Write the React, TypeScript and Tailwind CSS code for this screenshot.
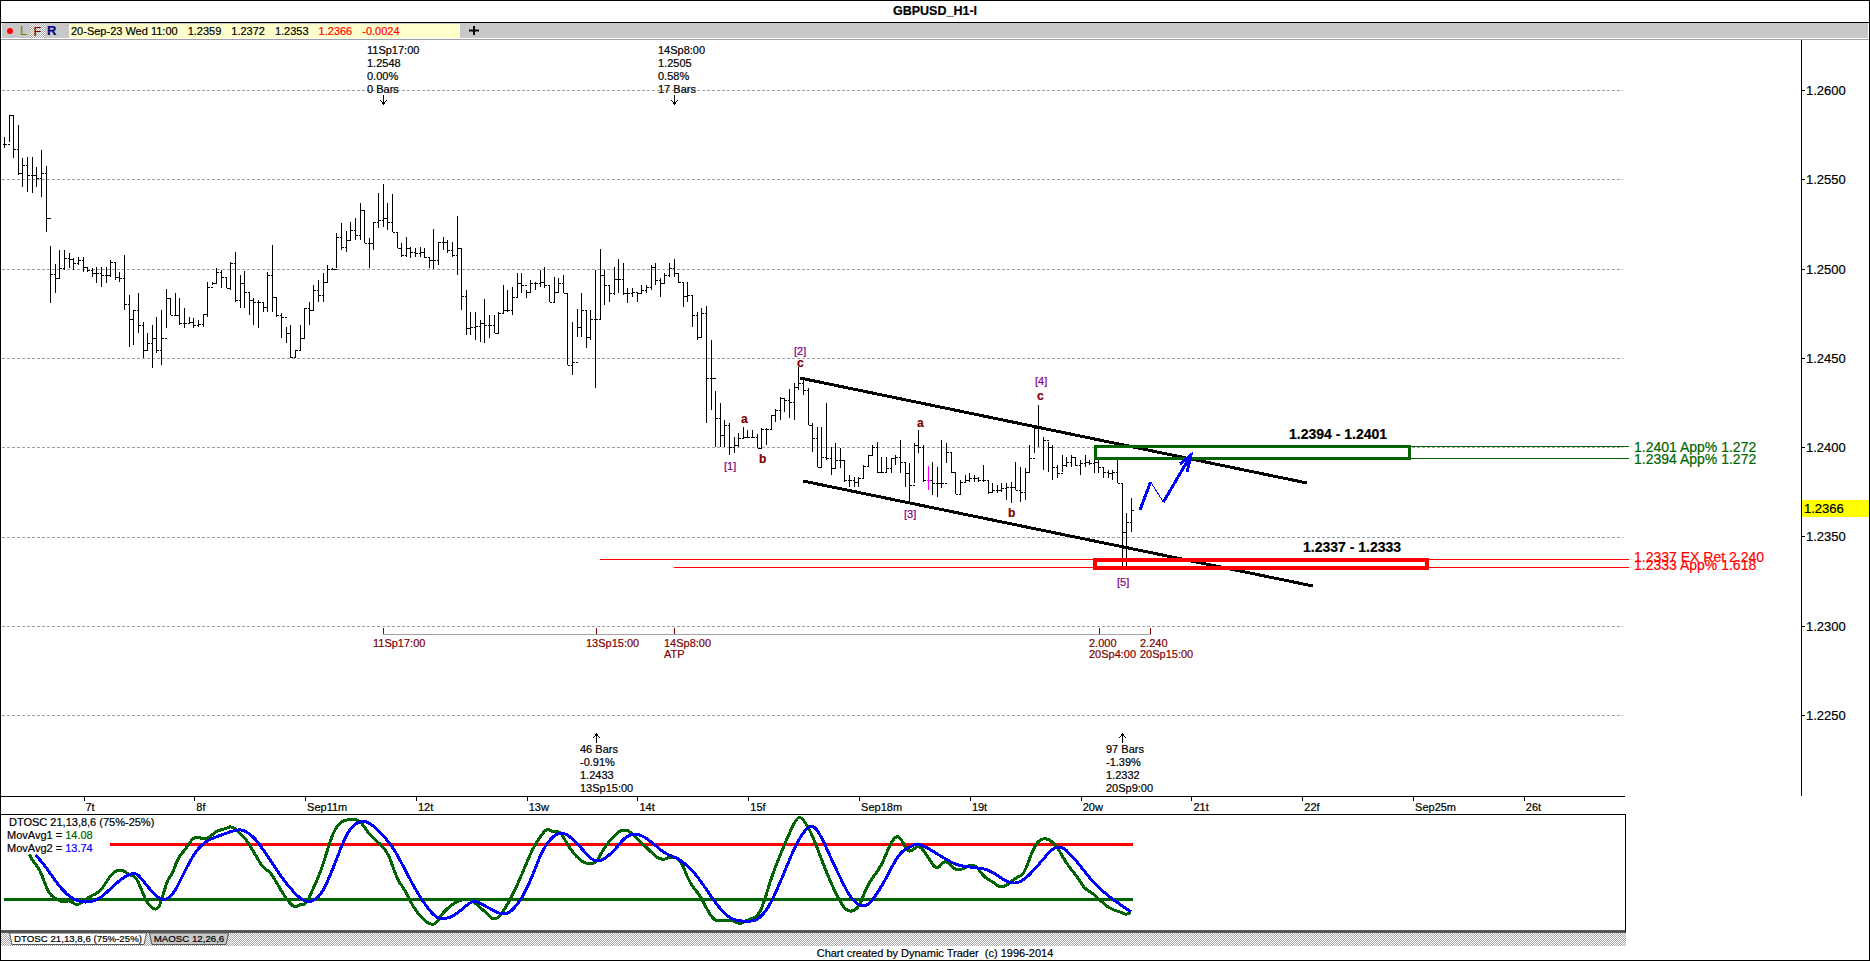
import type { ReactNode } from "react";

const FONT = "font-['Liberation_Sans',Arial,sans-serif]";
const DITHER =
  "bg-[repeating-conic-gradient(#a8a8a8_0%_25%,#ffffff_0%_50%)] [background-size:2px_2px]";

// bar data read off the chart: [high, low, close], y pixels x3
const BARS_A: number[][] = [
  [412, 445, 432], [345, 425, 345], [347, 475, 447], [375, 525, 520], [475, 560, 495], [470, 575, 525], [470, 578, 525], [500, 560, 535], [450, 590, 520], [498, 697, 655],
  [738, 908, 823], [792, 878, 833], [750, 835, 803], [750, 810, 775], [760, 805, 778], [775, 810, 790], [770, 795, 780], [772, 815, 800], [800, 815, 810], [805, 830, 820],
  [800, 850, 820], [800, 860, 825], [800, 850, 825], [780, 830, 787], [785, 840, 830], [815, 845, 833], [765, 930, 912], [885, 1040, 958], [930, 1035, 930], [878, 1000, 975],
  [965, 1075, 1050], [1000, 1050, 1030], [975, 1103, 1015], [950, 1060, 1050], [930, 1095, 1015], [868, 985, 895], [895, 945, 945], [880, 945, 945], [895, 975, 970], [925, 985, 970],
  [950, 972, 965], [955, 985, 975], [960, 980, 972], [943, 980, 943], [845, 950, 860], [845, 855, 850], [805, 850, 815], [810, 865, 830], [830, 865, 865], [785, 870, 790],
  [757, 905, 900], [825, 925, 850], [812, 925, 875], [875, 945, 900], [895, 975, 905], [900, 985, 905], [905, 935, 920], [815, 935, 825], [735, 935, 890], [890, 950, 945],
  [940, 1015, 950], [980, 1030, 1000], [975, 1075, 1070], [1050, 1072, 1050], [975, 1050, 1015], [925, 1015, 925], [905, 975, 930], [855, 930, 870], [840, 905, 885], [820, 905, 845],
  [795, 845, 808], [805, 810, 806], [700, 805, 710], [668, 750, 740], [693, 755, 720], [665, 720, 690], [655, 720, 705], [610, 720, 630], [630, 730, 730], [715, 805, 730],
  [665, 750, 665], [580, 685, 660], [552, 680, 655], [610, 690, 665], [582, 695, 695], [695, 745, 745], [730, 770, 765], [712, 770, 745], [740, 775, 755], [745, 770, 760],
  [740, 770, 755], [745, 775, 770], [770, 805, 780], [688, 808, 780], [725, 795, 725], [712, 750, 725], [720, 760, 750], [725, 770, 765], [648, 825, 745], [745, 930, 887],
  [870, 1005, 985], [935, 1005, 980], [935, 1020, 978], [960, 1025, 970], [897, 1028, 975], [945, 1015, 975], [945, 1000, 1000], [935, 1000, 940], [855, 940, 930], [870, 935, 930],
  [860, 945, 890], [820, 890, 850], [820, 880, 855], [870, 895, 875], [840, 875, 850], [845, 870, 850], [810, 860, 845], [800, 865, 855], [855, 905, 905], [830, 905, 875],
  [835, 880, 850], [825, 880, 880], [880, 1095, 1095], [965, 1125, 1085], [928, 1010, 980], [880, 1012, 930], [930, 1045, 1012], [930, 1020, 958], [810, 1163, 958], [748, 960, 825],
  [810, 915, 855], [855, 905, 878], [800, 885, 838], [778, 880, 838], [790, 885, 880], [865, 910, 880], [865, 890, 875], [880, 905, 880], [855, 880, 870], [855, 880, 860],
  [795, 870, 800], [790, 855, 840], [835, 890, 850], [820, 850, 825], [790, 830, 805], [778, 830, 820], [820, 850, 845], [845, 920, 888], [845, 905, 885], [885, 980, 945],
  [935, 1020, 1012], [925, 1015, 940], [918, 1270, 1135], [1020, 1230, 1135],
];
// second half, read from the lower crop (add 1020)
const BARS_B: number[][] = [
  [153, 320, 235], [190, 320, 285], [240, 320, 255], [250, 345, 320], [290, 340, 315], [280, 320, 295], [260, 295, 290], [270, 295, 290], [270, 295, 290], [283, 325, 325],
  [265, 325, 268], [265, 315, 268], [225, 268, 225], [208, 245, 210], [170, 240, 175], [175, 215, 180], [148, 235, 185], [130, 240, 140], [82, 150, 130], [115, 165, 150],
  [145, 255, 255], [250, 335, 295], [260, 380, 380], [262, 380, 350], [190, 360, 355], [320, 405, 385], [310, 385, 360], [325, 385, 360], [360, 425, 420], [405, 440, 420],
  [410, 440, 425], [410, 440, 415], [375, 415, 378], [345, 380, 345], [315, 345, 320], [305, 400, 395], [350, 395, 395], [350, 400, 385], [355, 400, 355], [345, 375, 350],
  [300, 400, 365], [365, 440, 400], [370, 490, 435], [310, 430, 315], [270, 340, 320], [315, 425, 420], [378, 450, 420], [365, 465, 430], [380, 472, 430], [300, 445, 430],
  [310, 370, 335], [340, 400, 395], [395, 462, 462], [420, 462, 425], [405, 425, 420], [400, 425, 415], [405, 425, 415], [410, 425, 420], [375, 425, 420], [420, 462, 455],
  [430, 460, 450], [435, 460, 450], [430, 455, 445], [430, 480, 440], [425, 488, 440], [365, 450, 450], [380, 485, 455], [385, 480, 395], [315, 395, 355], [260, 340, 265],
  [195, 320, 265], [290, 390, 300], [305, 395, 320], [315, 420, 380], [375, 415, 400], [345, 395, 375], [350, 380, 365], [345, 380, 350], [350, 378, 375], [360, 405, 370],
  [345, 380, 365], [360, 375, 368], [320, 400, 365], [350, 400, 380], [380, 415, 395], [390, 415, 400], [390, 420, 395], [352, 430, 428], [428, 687, 575], [520, 680, 545],
  [475, 575, 510],
];
const BARS = [...BARS_A, ...BARS_B.map(([h, l, c]) => [h + 1020, l + 1020, c + 1020])];
const MAGENTA_BAR = 200;

function barPaths() {
  let black = "";
  let pink = "";
  BARS.forEach(([hi, lo, close], i) => {
    const x = Math.round(4 + 4.618 * i) + 0.5;
    const open = i > 0 ? BARS[i - 1][2] : close;
    const d = `M${x} ${Math.round(hi / 3)}V${Math.round(lo / 3)}M${x - 2} ${Math.round(open / 3) + 0.5}H${x}M${x} ${Math.round(close / 3) + 0.5}H${x + 2}`;
    if (i === MAGENTA_BAR) pink += d;
    else black += d;
  });
  return { black, pink };
}

const GRID_Y = [90, 179, 269, 358, 447, 537, 626, 715];
const PRICES = ["1.2600", "1.2550", "1.2500", "1.2450", "1.2400", "1.2350", "1.2300", "1.2250"];

const DAYS = ["7t", "8f", "Sep11m", "12t", "13w", "14t", "15f", "Sep18m", "19t", "20w", "21t", "22f", "Sep25m", "26t"];

// oscillator lines, crop coordinates (x*2.24, y*3 from 680)
const G1 = [[65, 523], [75, 545], [90, 570], [100, 610], [112, 645], [130, 660], [145, 668], [155, 660], [172, 677], [185, 665], [200, 650], [215, 642], [230, 625], [245, 590], [262, 570], [275, 570], [290, 585], [305, 590], [320, 640], [332, 675], [352, 693], [362, 660], [375, 600], [385, 585], [400, 530], [415, 510], [435, 467], [455, 478], [470, 472], [485, 452], [505, 447], [517, 438], [530, 450], [550, 475], [570, 520], [590, 565], [605, 575], [625, 620], [640, 655], [660, 685], [672, 672], [685, 675], [700, 630], [720, 570], [740, 480], [755, 435], [775, 418], [805, 418], [825, 460], [850, 490], [870, 520], [890, 600], [905, 625], [925, 680], [945, 715], [965, 735], [978, 730], [990, 700], [1020, 665], [1050, 655], [1065, 670], [1085, 693], [1108, 725], [1130, 690], [1150, 640], [1170, 580], [1190, 515], [1205, 480], [1225, 443], [1240, 458], [1255, 452], [1275, 505], [1305, 550], [1335, 552], [1350, 510], [1370, 475], [1390, 450], [1408, 450], [1430, 480], [1450, 505], [1480, 543], [1505, 528], [1525, 540], [1545, 610], [1568, 645]];
const G2 = [[65, 700], [80, 725], [100, 720], [120, 722], [135, 733], [150, 720], [175, 710], [190, 660], [205, 590], [235, 490], [262, 410], [275, 415], [295, 460], [320, 550], [345, 630], [365, 680], [380, 697], [400, 685], [415, 630], [430, 595], [450, 560], [470, 495], [485, 465], [497, 480], [513, 522], [535, 492], [555, 530], [575, 573], [595, 535], [620, 578], [658, 547], [680, 590], [700, 605], [722, 627], [755, 590], [770, 585], [790, 510], [805, 478], [825, 475], [845, 500], [865, 550], [890, 590], [905, 625], [925, 640], [960, 685], [985, 695], [1000, 705], [1010, 695]];
const B1 = [[80, 525], [100, 555], [125, 605], [150, 645], [175, 665], [205, 667], [230, 650], [255, 615], [285, 585], [305, 577], [325, 610], [350, 650], [370, 662], [390, 640], [415, 570], [440, 510], [465, 480], [490, 468], [530, 448], [550, 452], [575, 480], [605, 540], [640, 610], [675, 660], [695, 668], [720, 645], [745, 570], [770, 480], [790, 435], [815, 420], [840, 440], [875, 490], [900, 550], [925, 615], [950, 670], [975, 712], [995, 718], [1020, 705], [1050, 670], [1065, 662], [1090, 680], [1125, 706], [1145, 695], [1170, 655], [1195, 580], [1215, 510], [1240, 465], [1265, 455], [1300, 500], [1325, 540], [1345, 545], [1375, 515], [1400, 470], [1425, 460], [1450, 475], [1490, 522], [1520, 535], [1550, 570], [1568, 600]];
const B2 = [[85, 680], [115, 720], [150, 725], [175, 720], [200, 680], [230, 590], [260, 490], [290, 432], [310, 450], [340, 540], [365, 610], [385, 660], [410, 682], [430, 665], [460, 600], [490, 520], [520, 495], [540, 492], [580, 525], [620, 557], [660, 562], [695, 570], [735, 610], [765, 608], [800, 560], [845, 487], [885, 535], [920, 600], [960, 650], [1010, 695]];

// rounds the corners with quadratic segments through the midpoints
function curve(a: number[][], b: number[][]) {
  const pts = [
    ...a.map(([x, y]) => [x / 2.24, 680 + y / 3]),
    ...b.map(([x, y]) => [680 + x / 2.24, 680 + y / 3]),
  ];
  let d = `M${pts[0][0].toFixed(1)} ${pts[0][1].toFixed(1)}`;
  for (let i = 1; i < pts.length - 1; i++) {
    const mx = (pts[i][0] + pts[i + 1][0]) / 2;
    const my = (pts[i][1] + pts[i + 1][1]) / 2;
    d += `Q${pts[i][0].toFixed(1)} ${pts[i][1].toFixed(1)} ${mx.toFixed(1)} ${my.toFixed(1)}`;
  }
  const last = pts[pts.length - 1];
  return `${d}L${last[0].toFixed(1)} ${last[1].toFixed(1)}`;
}

// x, y: page position of the first line's top, inside the price pane (top at 40)
function Note({ x, y, className = "", children }: { x: number; y: number; className?: string; children: ReactNode }) {
  return (
    <div
      className={`absolute flex flex-col whitespace-nowrap ${className}`}
      style={{ left: x - 1, top: y - 40 - 6.5 }}
    >
      {children}
    </div>
  );
}

function Lines({ items }: { items: string[] }) {
  return (
    <>
      {items.map((t) => (
        <span key={t}>{t}</span>
      ))}
    </>
  );
}

const SWING = "text-[11px] leading-[13px] text-black";
const TIME = "text-[11px] leading-[11px] text-[#800000]";
const WAVE = "text-[11px] leading-[13px] text-[#800080]";
const SUB = "text-[12px] leading-[13px] font-bold text-[#800000]";
const RANGE = "text-[14px] leading-[13px] font-bold text-black";

function PriceChart() {
  const { black, pink } = barPaths();
  return (
    <div className="relative flex-1 overflow-hidden">
      <svg className="absolute inset-0" width={1800} height={756} viewBox="1 40 1800 756">
        <g shapeRendering="crispEdges">
          {GRID_Y.map((y) => (
            <line key={y} x1={2} x2={1623} y1={y + 0.5} y2={y + 0.5} stroke="#a0a0a0" strokeDasharray="3 2" />
          ))}
          <path d={black} stroke="#000" fill="none" />
          <path d={pink} stroke="#ff00ff" fill="none" />

          {/* time projection line */}
          <path d="M383 634.5H1151" stroke="#a0a0a0" fill="none" />
          <path d="M383.5 628V634M596.5 628V634M674.5 628V634M1099.5 628V634M1150.5 628V634" stroke="#800000" fill="none" />

          {/* channel */}
          <line x1={800} y1={378} x2={1307} y2={483} stroke="#000" strokeWidth={3} />
          <line x1={803} y1={481} x2={1313} y2={586} stroke="#000" strokeWidth={3} />

          {/* target lines */}
          <path d="M1409 446.5H1629M1409 458.5H1629" stroke="#006400" fill="none" />
          <path d="M600 559.5H1629M674 567.5H1629" stroke="#ff0000" fill="none" />
          <rect x={1095} y={446} width={314} height={12} fill="none" stroke="#006400" strokeWidth={3} />
          <rect x={1095} y={560} width={332} height={8} fill="none" stroke="#ff0000" strokeWidth={4} />

          {/* projected path */}
          <path d="M1140 510L1150.6 482M1163.4 502L1191 455M1180 464L1191 455L1187 472" stroke="#0000ff" strokeWidth={3} fill="none" />
          <path d="M1150.6 482L1163.4 502" stroke="#0000ff" fill="none" />

          {/* swing arrows */}
          <path d="M383.5 95V104M380 100L383.5 104L387 100M674.5 95V104M671 100L674.5 104L678 100" stroke="#000" fill="none" />
          <path d="M596.5 734V743M593 738L596.5 734L600 738M1122.5 734V743M1119 738L1122.5 734L1126 738" stroke="#000" fill="none" />
        </g>
      </svg>

      <Note x={367} y={50} className={SWING}><Lines items={["11Sp17:00", "1.2548", "0.00%", "0 Bars"]} /></Note>
      <Note x={658} y={50} className={SWING}><Lines items={["14Sp8:00", "1.2505", "0.58%", "17 Bars"]} /></Note>
      <Note x={580} y={749} className={SWING}><Lines items={["46 Bars", "-0.91%", "1.2433", "13Sp15:00"]} /></Note>
      <Note x={1106} y={749} className={SWING}><Lines items={["97 Bars", "-1.39%", "1.2332", "20Sp9:00"]} /></Note>

      <Note x={373} y={644} className={TIME}>11Sp17:00</Note>
      <Note x={586} y={644} className={TIME}>13Sp15:00</Note>
      <Note x={664} y={644} className={TIME}><Lines items={["14Sp8:00", "ATP"]} /></Note>
      <Note x={1089} y={644} className={TIME}><Lines items={["2.000", "20Sp4:00"]} /></Note>
      <Note x={1140} y={644} className={TIME}><Lines items={["2.240", "20Sp15:00"]} /></Note>

      <Note x={724} y={466} className={WAVE}>[1]</Note>
      <Note x={794} y={351} className={WAVE}>[2]</Note>
      <Note x={904} y={514} className={WAVE}>[3]</Note>
      <Note x={1035} y={381} className={WAVE}>[4]</Note>
      <Note x={1117} y={582} className={WAVE}>[5]</Note>

      <Note x={741} y={419} className={SUB}>a</Note>
      <Note x={759} y={459} className={SUB}>b</Note>
      <Note x={797} y={363} className={SUB}>c</Note>
      <Note x={917} y={423} className={SUB}>a</Note>
      <Note x={1008} y={513} className={SUB}>b</Note>
      <Note x={1037} y={396} className={SUB}>c</Note>

      <Note x={1289} y={434} className={RANGE}>1.2394 - 1.2401</Note>
      <Note x={1303} y={547} className={RANGE}>1.2337 - 1.2333</Note>
      <Note x={1634} y={447} className="text-[14px] leading-[12px] text-[#006400]">
        <Lines items={["1.2401 App% 1.272", "1.2394 App% 1.272"]} />
      </Note>
      <Note x={1634} y={559} className="text-[14px] leading-[8px] text-[#ff0000]">
        <Lines items={["1.2337 EX Ret 2.240", "1.2333 App% 1.618"]} />
      </Note>
    </div>
  );
}

function PriceAxis() {
  return (
    <div className="relative flex w-[68px] shrink-0 flex-col border-l border-black pt-[42px]">
      {PRICES.map((p) => (
        <div key={p} className="flex h-[89.29px] shrink-0 items-start text-[13px] leading-[18px] text-black">
          <span className="mr-px mt-[8px] h-px w-[3px] bg-black" />
          {p}
        </div>
      ))}
      {/* current price flag */}
      <div className="absolute left-0 right-0 top-[460px] h-[17px] bg-[#ffff00] pl-[2px] text-[13px] leading-[18px] text-black">
        1.2366
      </div>
    </div>
  );
}

function TimeAxis() {
  return (
    <div className="flex h-[18px] w-[1624px] overflow-hidden border-t border-black pl-[82.5px]">
      {DAYS.map((d) => (
        <div key={d} className="flex w-[110.8px] shrink-0 flex-col">
          <span className="h-[4px] w-px bg-black" />
          <span className="pl-[2px] text-[11px] leading-[13px] text-black">{d}</span>
        </div>
      ))}
    </div>
  );
}

function Oscillator() {
  return (
    <div className="relative h-[119px] w-[1625px] border-b-[3px] border-r border-t border-b-[#555] border-r-black border-t-black">
      <svg className="absolute inset-0" width={1624} height={115} viewBox="1 815 1624 115">
        <g shapeRendering="crispEdges">
          <rect x={110} y={843} width={1023} height={3} fill="#ff0000" />
          <rect x={4} y={898} width={1129} height={3} fill="#006400" />
          <path d={curve(G1, G2)} fill="none" stroke="#006400" strokeWidth={3} strokeLinejoin="round" />
          <path d={curve(B1, B2)} fill="none" stroke="#0000ff" strokeWidth={3} strokeLinejoin="round" />
        </g>
      </svg>
      <div className="absolute left-[6px] top-[1px] flex flex-col whitespace-nowrap text-[11px] leading-[13px] text-black">
        <span className="pl-[2px]">DTOSC 21,13,8,6 (75%-25%)</span>
        <span>MovAvg1 = <span className="text-[#006400]">14.08</span></span>
        <span>MovAvg2 = <span className="text-[#0000ff]">13.74</span></span>
      </div>
    </div>
  );
}

function Tab({ label, width, fill }: { label: string; width: number; fill: string }) {
  return (
    <div className="relative flex h-[12px] items-center justify-center" style={{ width }}>
      <svg className="absolute inset-0" width={width} height={12}>
        <polygon points={`0.5,0 ${width - 0.5},0 ${width - 3},11.5 3,11.5`} fill={fill} stroke="#555" />
      </svg>
      <span className="relative whitespace-nowrap text-[9.7px] leading-[12px] text-black">{label}</span>
    </div>
  );
}

export default function App() {
  return (
    <div className={`flex h-[961px] w-[1870px] flex-col overflow-hidden border border-black bg-white [-webkit-text-stroke:0.2px] ${FONT}`}>
      <div className="flex h-[22px] shrink-0 items-center justify-center border-b border-black text-[12.5px] font-bold text-black">
        GBPUSD_H1-I
      </div>

      <div className="mx-px mb-px flex h-[15px] shrink-0 items-center bg-[#c8c8c8]">
        <span className="ml-[5px] h-[6px] w-[6px] rounded-full bg-[#ff0000]" />
        <span className="ml-[7px] w-[7px] text-[13px] leading-[15px] text-[#808000]">L</span>
        <span className={`ml-[3px] flex h-[14px] w-[15px] items-end justify-center text-[13px] leading-[13px] text-[#800000] ${DITHER}`}>F</span>
        <span className="ml-[2px] w-[10px] text-[13px] font-bold leading-[15px] text-[#000080]">R</span>
        <div className="ml-[12px] flex h-[14px] w-[391px] items-center gap-[10px] bg-[#ffffcc] pl-[2px] text-[11px] leading-[14px]">
          <span className="text-black">20-Sep-23 Wed 11:00</span>
          <span className="text-black">1.2359</span>
          <span className="text-black">1.2372</span>
          <span className="text-black">1.2353</span>
          <span className="text-[#ff0000]">1.2366</span>
          <span className="text-[#ff0000]">-0.0024</span>
        </div>
        <svg className="ml-[9px]" width={10} height={9} viewBox="0 0 10 9">
          <path d="M0 3.5H10V5.5H0ZM4 0H6V9H4Z" fill="#000" />
        </svg>
      </div>
      <div className="h-px shrink-0 bg-[#a0a0a0]" />

      <div className="flex h-[756px] shrink-0">
        <PriceChart />
        <PriceAxis />
      </div>

      <TimeAxis />
      <Oscillator />

      <div className={`flex h-[13px] w-[1625px] shrink-0 items-start pl-[8px] ${DITHER}`}>
        <Tab label="DTOSC 21,13,8,6 (75%-25%)" width={138} fill="#ffffff" />
        <div className="ml-[2px]">
          <Tab label="MAOSC 12,26,6" width={80} fill="#c8c8c8" />
        </div>
      </div>

      <div className="flex flex-1 items-center justify-center text-[11px] leading-[13px] text-black">
        Chart created by Dynamic Trader&nbsp;&nbsp;(c) 1996-2014
      </div>
    </div>
  );
}
